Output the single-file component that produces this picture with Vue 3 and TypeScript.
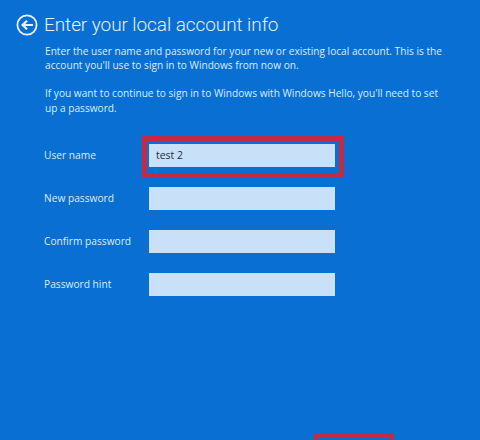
<script setup lang="ts">
const fields: { label: string; value: string; highlighted: boolean }[] = [
  { label: 'User name', value: 'test 2', highlighted: true },
  { label: 'New password', value: '', highlighted: false },
  { label: 'Confirm password', value: '', highlighted: false },
  { label: 'Password hint', value: '', highlighted: false },
]
</script>

<template>
  <div class="page">
    <header class="head">
      <svg class="back" width="22" height="22" viewBox="0 0 22 22" fill="none">
        <circle cx="11" cy="11" r="9.6" stroke="#eaf4fd" stroke-width="1.8" />
        <path d="M17 11H7.2M11 6.8L6.6 11L11 15.2" stroke="#eaf4fd" stroke-width="2.2" />
      </svg>
      <h1 class="title">Enter your local account info</h1>
    </header>
    <div class="copy">
      <p>Enter the user name and password for your new or existing local account. This is the account you'll use to sign in to Windows from now on.</p>
      <p>If you want to continue to sign in to Windows with Windows Hello, you'll need to set up a password.</p>
    </div>
    <form class="form">
      <div v-for="f in fields" :key="f.label" class="row">
        <span class="label">{{ f.label }}</span>
        <div class="input">{{ f.value }}<span v-if="f.highlighted" class="mark"></span></div>
      </div>
    </form>
    <footer class="foot"><span class="next-mark"></span></footer>
  </div>
</template>

<style scoped>
.page {
  width: 480px;
  height: 440px;
  box-sizing: border-box;
  overflow: hidden;
  background: #0a6fd2;
  color: #d9ecfc;
  font-family: "Open Sans", "Noto Sans", sans-serif;
  padding: 14px 0 0 16px;
  display: flex;
  flex-direction: column;
}
.head { display: flex; align-items: center; gap: 6px; height: 22px; }
.back { flex: none; }
.title {
  margin: 0;
  font-family: Roboto, "Open Sans", sans-serif;
  font-size: 19px;
  letter-spacing: -0.08px;
  font-weight: 300;
  line-height: 22px;
  color: #e4f1fd;
  white-space: nowrap;
}
.copy {
  margin: 7.5px 0 0 29px;
  width: 402px;
  font-size: 10.15px;
  line-height: 14.2px;
}
.copy p { margin: 0 0 14.5px; }
.form {
  margin: 0 0 0 28px;
  padding-top: 14.5px;
  display: flex;
  flex-direction: column;
  gap: 20px;
}
.row { display: flex; align-items: center; height: 23px; }
.label { width: 105px; font-size: 10.2px; flex: none; white-space: nowrap; }
.input {
  position: relative;
  width: 186px;
  height: 23px;
  box-sizing: border-box;
  background: #c9e1f8;
  color: #1d2c3c;
  font-size: 10.4px;
  line-height: 23px;
  padding-left: 7px;
}
.mark {
  position: absolute;
  left: -7px;
  top: -8px;
  width: 202px;
  height: 42px;
  box-sizing: border-box;
  border: 5px solid #c22a45;
}
.foot { position: relative; flex: 1; }
.next-mark {
  position: absolute;
  left: 298px;
  bottom: -23px;
  width: 80px;
  height: 30px;
  box-sizing: border-box;
  border: 4px solid #c22a45;
}
</style>
